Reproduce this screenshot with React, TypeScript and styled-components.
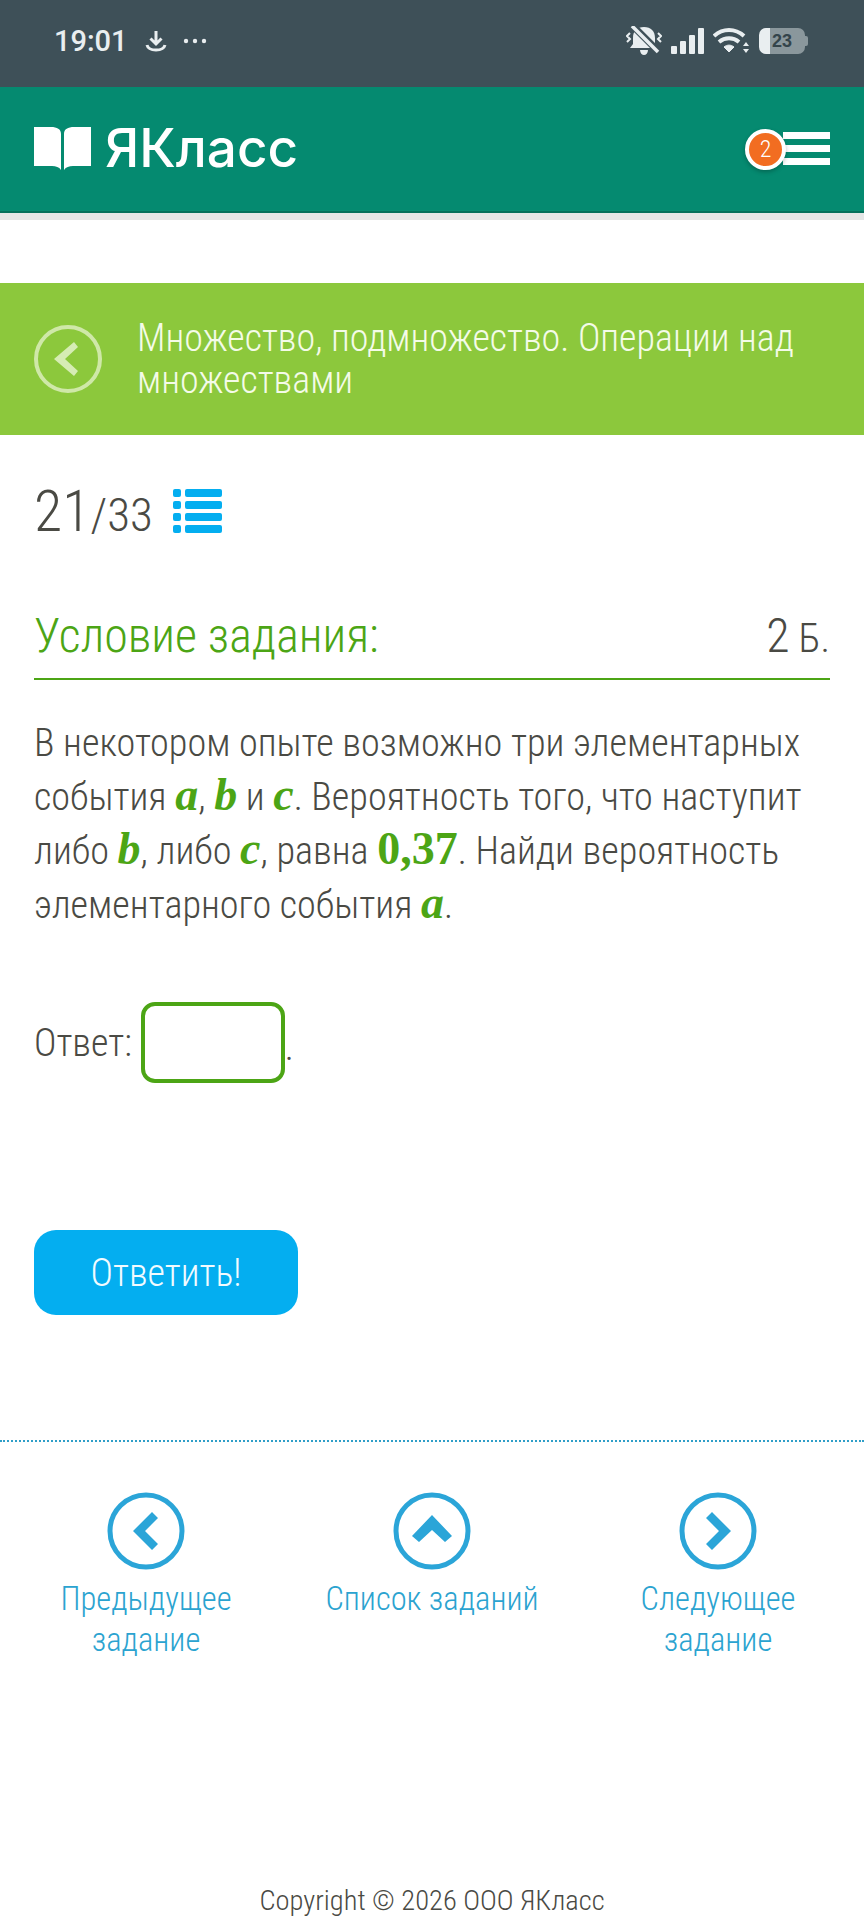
import React from 'react'
import styled, { createGlobalStyle } from 'styled-components'

const GlobalStyle = createGlobalStyle`
    html, body {
        margin: 0;
        padding: 0;
        background: #ffffff;
    }
    body {
        font-family: Roboto, "Liberation Sans", sans-serif;
        font-weight: 300;
        font-stretch: 85%;
        color: #4a4a44;
    }
`

const Page = styled.div`
    width: 864px;
    height: 1920px;
    overflow: hidden;
    display: flex;
    flex-direction: column;
`

const StatusBar = styled.div`
    height: 87px;
    flex: none;
    background: #3e5058;
    display: flex;
    align-items: center;
    justify-content: space-between;
    padding: 0 56px 6px 54px;
    box-sizing: border-box;
    color: #e9eef0;
`

const StatusGroup = styled.div`
    display: flex;
    align-items: center;
`

const Clock = styled.span`
    font-size: 29px;
    font-weight: 500;
    font-stretch: 100%;
    margin-right: 17px;
`

const Header = styled.header`
    height: 126px;
    flex: none;
    box-sizing: border-box;
    background: #058a70;
    border-bottom: 2px solid #04705b;
    display: flex;
    align-items: center;
    justify-content: space-between;
    padding: 0 34px 2px;
`

const Logo = styled.div`
    display: flex;
    align-items: center;
    gap: 14px;
    color: #ffffff;
    font-family: Inter, "Open Sans", sans-serif;
    font-stretch: 100%;
    font-size: 53px;
    font-weight: 500;
`

const Burger = styled.div`
    position: relative;
    width: 47px;
    height: 33px;
    display: flex;
    flex-direction: column;
    justify-content: space-between;
`

const BurgerLine = styled.span`
    height: 7px;
    background: #ffffff;
`

const Badge = styled.span`
    position: absolute;
    left: -38px;
    top: -3px;
    width: 33px;
    height: 33px;
    border: 4px solid #ffffff;
    border-radius: 50%;
    background: #f26d21;
    color: #ffffff;
    font-size: 24px;
    font-weight: 300;
    display: flex;
    align-items: center;
    justify-content: center;
    box-shadow: 0 2px 4px rgba(0, 0, 0, 0.25);
`

const HeaderShade = styled.div`
    height: 7px;
    flex: none;
    background: #e4e6e6;
`

const TopicBand = styled.div`
    margin-top: 63px;
    height: 152px;
    flex: none;
    background: #8cc83c;
    display: flex;
    align-items: center;
    gap: 35px;
    padding: 0 34px;
    box-sizing: border-box;
`

const TopicTitle = styled.div`
    color: #f4fbe8;
    font-size: 38px;
    line-height: 42px;
`

const Content = styled.main`
    padding: 0 34px;
    display: flex;
    flex-direction: column;
`

const Counter = styled.div`
    margin-top: 42px;
    height: 68px;
    display: flex;
    align-items: center;
    gap: 20px;
`

const CounterValue = styled.div`
    font-size: 47px;
    & b {
        font-size: 58px;
        font-weight: 300;
    }
`

const SectionHead = styled.div`
    margin-top: 62px;
    padding-bottom: 14px;
    border-bottom: 2px solid #4ca515;
    display: flex;
    align-items: baseline;
    justify-content: space-between;
`

const SectionTitle = styled.div`
    color: #4ca515;
    font-size: 48px;
    line-height: 54px;
`

const Points = styled.div`
    font-size: 40px;
    & b {
        font-size: 48px;
        font-weight: 300;
    }
`

const Task = styled.p`
    margin: 36px 0 0;
    font-size: 38.2px;
    line-height: 54px;
`

const MathVar = styled.span`
    color: #4ca515;
    font-family: "Liberation Serif", serif;
    font-stretch: 100%;
    font-style: ${p => (p.$upright ? 'normal' : 'italic')};
    font-weight: 700;
    font-size: 46px;
    line-height: 1;
`

const AnswerRow = styled.div`
    margin-top: 70px;
    display: flex;
    align-items: center;
    gap: 9px;
    font-size: 38px;
`

const AnswerInput = styled.input`
    width: 144px;
    height: 81px;
    box-sizing: border-box;
    border: 4px solid #4ca515;
    border-radius: 14px;
    background: #ffffff;
    outline: none;
`

const Dot = styled.span`
    align-self: flex-end;
    margin-left: -9px;
    margin-bottom: 14px;
`

const SubmitButton = styled.button`
    margin-top: 147px;
    width: 264px;
    height: 85px;
    border: none;
    border-radius: 22px;
    background: #04aef0;
    color: #f2fbff;
    font-family: inherit;
    font-weight: 300;
    font-stretch: 85%;
    font-size: 38px;
`

const Divider = styled.div`
    margin-top: 125px;
    border-top: 2px dotted #2f9fc8;
`

const Nav = styled.nav`
    margin-top: 50px;
    display: flex;
    justify-content: space-between;
    padding: 0 16px;
`

const NavItem = styled.div`
    width: 260px;
    display: flex;
    flex-direction: column;
    align-items: center;
    gap: 9px;
    color: #2ba3d0;
    font-size: 32.5px;
    line-height: 41px;
    text-align: center;
`

const Spacer = styled.div`
    flex: 1;
`

const Copyright = styled.footer`
    padding-bottom: 1px;
    text-align: center;
    font-size: 28.5px;
    line-height: 36px;
`

function NavCircle({ points }: { points: string }) {
    return (
        <svg width="78" height="78" viewBox="0 0 78 78" fill="none">
            <circle cx="39" cy="39" r="36" stroke="#2ba5d8" strokeWidth="5" />
            <polygon points={points} fill="#2ba5d8" />
        </svg>
    )
}

function BookIcon() {
    return (
        <svg width="57" height="44" viewBox="0 0 57 44" fill="#ffffff">
            <path d="M0 1h17c6 0 10 2 10 7v36c-2-3-5-4-9-4H0z" />
            <path d="M57 1H40c-6 0-10 2-10 7v36c2-3 5-4 9-4h18z" />
        </svg>
    )
}

function DownloadIcon() {
    return (
        <svg width="22" height="22" viewBox="0 0 22 22" fill="none" stroke="#e9eef0" strokeWidth="3">
            <path d="M11 1v12M5.500 8.500 11 14l5.500-5.500" />
            <path d="M2 15c1 4 4 5 9 5s8-1 9-5" />
        </svg>
    )
}

const DotsGlyph = styled.svg`
    margin-left: 16px;
`

function DotsIcon() {
    return (
        <DotsGlyph width="24" height="6" viewBox="0 0 24 6" fill="#e9eef0">
            <circle cx="3" cy="3" r="2.200" />
            <circle cx="12" cy="3" r="2.200" />
            <circle cx="21" cy="3" r="2.200" />
        </DotsGlyph>
    )
}

function BellOffIcon() {
    return (
        <svg width="36" height="30" viewBox="0 0 36 30" fill="#e9eef0">
            <path d="M18 1c7 0 11 4 11 11v6l3 4H4l3-4v-6C7 5 11 1 18 1z" />
            <path d="M14 24h8c0 3-2 5-4 5s-4-2-4-5z" />
            <path d="M5 -2 33 26" stroke="#3e5058" strokeWidth="7" />
            <path d="M6 0 32 26" stroke="#e9eef0" strokeWidth="3.500" />
            <path d="M4 7 1 10l3 3-3 3M32 7l3 3-3 3 3 3" stroke="#e9eef0" strokeWidth="2" fill="none" />
        </svg>
    )
}

const StatusGlyph = styled.svg`
    margin-left: 9px;
`

function SignalIcon() {
    return (
        <StatusGlyph width="33" height="26" viewBox="0 0 33 26" fill="#e9eef0">
            <rect x="0" y="18" width="6" height="8" rx="1" />
            <rect x="9" y="13" width="6" height="13" rx="1" />
            <rect x="18" y="7" width="6" height="19" rx="1" />
            <rect x="27" y="0" width="6" height="26" rx="1" />
        </StatusGlyph>
    )
}

function WifiIcon() {
    return (
        <StatusGlyph width="38" height="26" viewBox="0 0 38 26" fill="none" stroke="#e9eef0">
            <path d="M1 8c9-8 21-8 30 0" strokeWidth="4" />
            <path d="M6 14c6-5 14-5 20 0" strokeWidth="4" />
            <path d="M11 19c3-2.500 7-2.500 10 0l-5 5z" fill="#e9eef0" strokeWidth="1" />
            <path d="M33 14l3 4h-6zM33 25l3-4h-6z" fill="#e9eef0" strokeWidth="0" />
        </StatusGlyph>
    )
}

const Battery = styled.div`
    margin-left: 8px;
    width: 46px;
    height: 26px;
    border-radius: 7px;
    overflow: hidden;
    background: linear-gradient(90deg, #e9eef0 0 11px, #8a979c 11px);
    color: #34444b;
    font-family: "Liberation Sans", sans-serif;
    font-stretch: 100%;
    font-size: 18px;
    font-weight: 700;
    line-height: 26px;
    padding-left: 13px;
    box-sizing: border-box;
`

const BatteryCap = styled.span`
    width: 3px;
    height: 10px;
    border-radius: 0 2px 2px 0;
    background: #8a979c;
`

const BackGlyph = styled.svg`
    flex: none;
`

function ListIcon() {
    return (
        <svg width="49" height="45" viewBox="0 0 49 45" fill="#04aef0">
            {[0, 12, 24, 36].map(y => (
                <g key={y}>
                    <rect x="0" y={y} width="8" height="8" rx="2" />
                    <rect x="12" y={y} width="37" height="8" rx="2" />
                </g>
            ))}
        </svg>
    )
}

export default function App() {
    return (
        <Page>
            <GlobalStyle />
            <StatusBar>
                <StatusGroup>
                    <Clock>19:01</Clock>
                    <DownloadIcon />
                    <DotsIcon />
                </StatusGroup>
                <StatusGroup>
                    <BellOffIcon />
                    <SignalIcon />
                    <WifiIcon />
                    <Battery>23</Battery>
                    <BatteryCap />
                </StatusGroup>
            </StatusBar>
            <Header>
                <Logo>
                    <BookIcon />
                    ЯКласс
                </Logo>
                <Burger>
                    <Badge>2</Badge>
                    <BurgerLine />
                    <BurgerLine />
                    <BurgerLine />
                </Burger>
            </Header>
            <HeaderShade />
            <TopicBand>
                <BackGlyph width="68" height="68" viewBox="0 0 68 68" fill="none">
                    <circle cx="34" cy="34" r="32" stroke="#cfe8a8" strokeWidth="4" />
                    <polygon points="20,34 40,17 44,22 31,34 44,46 40,51" fill="#d6ecb4" />
                </BackGlyph>
                <TopicTitle>Множество, подмножество. Операции над множествами</TopicTitle>
            </TopicBand>
            <Content>
                <Counter>
                    <CounterValue>
                        <b>21</b>/33
                    </CounterValue>
                    <ListIcon />
                </Counter>
                <SectionHead>
                    <SectionTitle>Условие задания:</SectionTitle>
                    <Points>
                        <b>2</b> Б.
                    </Points>
                </SectionHead>
                <Task>
                    В некотором опыте возможно три элементарных события <MathVar>a</MathVar>, <MathVar>b</MathVar> и{' '}
                    <MathVar>c</MathVar>. Вероятность того, что наступит либо <MathVar>b</MathVar>, либо{' '}
                    <MathVar>c</MathVar>, равна <MathVar $upright>0,37</MathVar>. Найди вероятность элементарного
                    события <MathVar>a</MathVar>.
                </Task>
                <AnswerRow>
                    Ответ:
                    <AnswerInput aria-label="Ответ" />
                    <Dot>.</Dot>
                </AnswerRow>
                <SubmitButton>Ответить!</SubmitButton>
            </Content>
            <Divider />
            <Nav>
                <NavItem>
                    <NavCircle points="26,39 45,20 51,26 38,39 51,52 45,58" />
                    Предыдущее задание
                </NavItem>
                <NavItem>
                    <NavCircle points="39,23 59,44 52,50 39,38 26,50 19,44" />
                    Список заданий
                </NavItem>
                <NavItem>
                    <NavCircle points="52,39 33,20 27,26 40,39 27,52 33,58" />
                    Следующее задание
                </NavItem>
            </Nav>
            <Spacer />
            <Copyright>Copyright © 2026 ООО ЯКласс</Copyright>
        </Page>
    )
}
